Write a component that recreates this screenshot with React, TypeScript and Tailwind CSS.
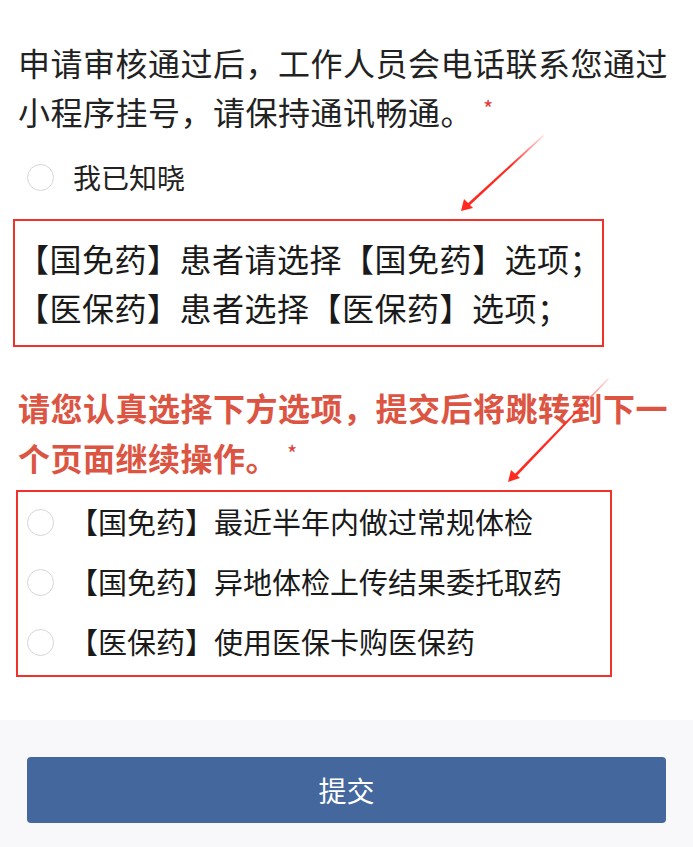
import React from 'react'

const FONT = '"Noto Sans CJK SC", "Noto Sans", sans-serif'

function Radio() {
  return <span className="block w-[27px] h-[27px] shrink-0 rounded-full border-[1.5px] border-[#d6d6d6] bg-white" />
}

const options = [
  '【国免药】最近半年内做过常规体检',
  '【国免药】异地体检上传结果委托取药',
  '【医保药】使用医保卡购医保药',
]

export default function App() {
  return (
    <main className="relative w-[693px] h-[847px] bg-white flex flex-col overflow-hidden" style={{ fontFamily: FONT }}>
      <div className="flex-1 px-[13px] pt-[38px]">
        {/* Notice question */}
        <p className="pl-[5px] text-[32px] leading-[49px] text-[#222] tracking-[0.5px]">
          申请审核通过后，工作人员会电话联系您通过小程序挂号，请保持通讯畅通。<span className="inline-block align-top ml-[10px] mt-[9px] text-[22px] leading-[22px] text-[#e03c3c]">*</span>
        </p>

        <label className="mt-[21px] pl-[14px] h-[40px] flex items-center gap-[19px]">
          <Radio />
          <span className="text-[28px] text-[#222]">我已知晓</span>
        </label>

        {/* Annotation box 1 */}
        <div className="mt-[22px] w-[591px] border-2 border-[#f1322b] pl-[2px] pt-[13px] pb-[13px] text-[32px] leading-[49px] text-[#1a1a1a] tracking-[0.5px]">
          <p>【国免药】患者请选择【国免药】选项；</p>
          <p>【医保药】患者选择【医保药】选项；</p>
        </div>

        {/* Red question */}
        <p className="mt-[35px] pl-[5px] text-[32px] leading-[50px] font-bold text-[#dc5442] tracking-[0.5px]">
          请您认真选择下方选项，提交后将跳转到下一个页面继续操作。<span className="inline-block align-top ml-[9px] mt-[9px] text-[22px] leading-[22px] font-normal text-[#e03c3c]">*</span>
        </p>

        {/* Annotation box 2 */}
        <div className="mt-[8px] ml-[3px] w-[596px] border-2 border-[#f1322b] pb-[3px]">
          {options.map(o => (
            <label key={o} className="h-[60px] flex items-center gap-[15px] pl-[9px]">
              <Radio />
              <span className="text-[29px] text-[#1a1a1a]">{o}</span>
            </label>
          ))}
        </div>
      </div>

      {/* Footer */}
      <div className="h-[127px] bg-[#f8f8fa] px-[27px] pt-[37px]">
        <button className="w-full h-[66px] rounded-[4px] bg-[#44679e] text-white text-[28px]">提交</button>
      </div>

      {/* Red annotation arrows */}
      <svg className="absolute inset-0 pointer-events-none" width="693" height="847">
        <defs>
          <linearGradient id="g1" x1="543" y1="135" x2="461" y2="211" gradientUnits="userSpaceOnUse">
            <stop offset="0" stopColor="#ff2a20" stopOpacity="0.15" />
            <stop offset="0.4" stopColor="#ff2a20" stopOpacity="1" />
          </linearGradient>
          <linearGradient id="g2" x1="608" y1="378" x2="508" y2="482" gradientUnits="userSpaceOnUse">
            <stop offset="0" stopColor="#ff2a20" stopOpacity="0.15" />
            <stop offset="0.4" stopColor="#ff2a20" stopOpacity="1" />
          </linearGradient>
        </defs>
        <polygon points="543,135 544,136 468,207 466,205" fill="url(#g1)" />
        <polygon points="461,211 464,199 473,208" fill="#ff2a20" />
        <polygon points="608,378 609,379 514,479 512,477" fill="url(#g2)" />
        <polygon points="508,482 511,470 520,478" fill="#ff2a20" />
      </svg>
    </main>
  )
}
